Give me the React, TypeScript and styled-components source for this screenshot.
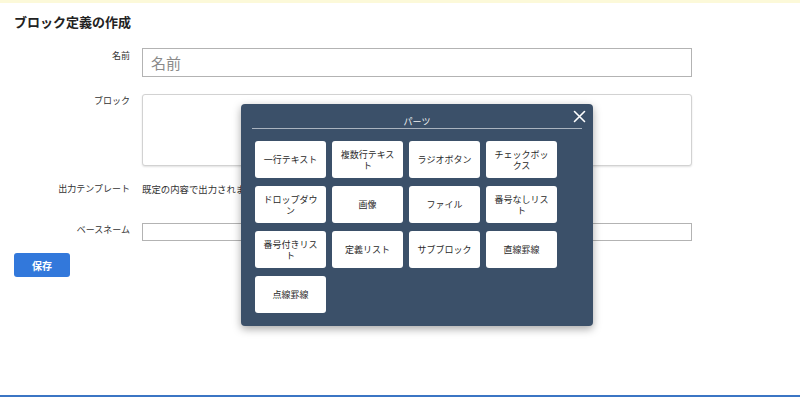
import React from "react";
import styled, { createGlobalStyle } from "styled-components";

const GlobalStyle = createGlobalStyle`
  html, body {
    margin: 0;
    padding: 0;
    background: #fff;
  }
  body {
    font-family: "Noto Sans CJK JP", "Noto Sans", sans-serif;
    color: #333;
  }
`;

const Page = styled.div`
  position: relative;
  height: 397px;
  display: flex;
  flex-direction: column;
  overflow: hidden;
`;

const Notice = styled.div`
  height: 3px;
  background: #fcf9d9;
`;

const Main = styled.main`
  flex: 1;
  padding: 11px 14px 0;
`;

const Title = styled.h1`
  margin: 0 0 18px;
  font-size: 13px;
  line-height: 16px;
  font-weight: 700;
  color: #222;
`;

const Row = styled.div<{ $mb: number }>`
  display: grid;
  grid-template-columns: 116px 550px;
  column-gap: 12px;
  margin-bottom: ${(p) => p.$mb}px;
`;

const Label = styled.label<{ $pt: number }>`
  text-align: right;
  font-size: 9px;
  line-height: 12px;
  padding-top: ${(p) => p.$pt}px;
  color: #333;
`;

const TextInput = styled.input<{ $h: number; $fs: number }>`
  display: block;
  box-sizing: border-box;
  width: 100%;
  height: ${(p) => p.$h}px;
  border: 1px solid #b3b3b3;
  border-radius: 0;
  padding: 0 8px;
  font-family: inherit;
  font-size: ${(p) => p.$fs}px;
  color: #333;
  outline: none;
  &::placeholder {
    color: #8a8a8a;
  }
`;

const TextArea = styled.textarea`
  display: block;
  box-sizing: border-box;
  width: 100%;
  height: 72px;
  border: 1px solid #d2d2d2;
  border-radius: 3px;
  box-shadow: 0 1px 2px rgba(0, 0, 0, 0.12);
  resize: none;
  outline: none;
  font-family: inherit;
`;

const Plain = styled.div`
  font-size: 9.4px;
  line-height: 12px;
  white-space: nowrap;
  color: #333;
`;

const SaveButton = styled.button`
  display: block;
  width: 56px;
  height: 24px;
  border: none;
  border-radius: 3px;
  background: #3278db;
  color: #fff;
  font-family: inherit;
  font-weight: 700;
  font-size: 10px;
  padding: 0;
`;

const Footer = styled.div`
  height: 2px;
  background: #3b75c4;
`;

const Modal = styled.div`
  position: absolute;
  left: 241px;
  top: 104px;
  width: 352px;
  height: 222px;
  box-sizing: border-box;
  padding: 12px 11px;
  background: #3b5069;
  border-radius: 4px;
  box-shadow: 0 3px 8px rgba(0, 0, 0, 0.35);
`;

const ModalHead = styled.div`
  text-align: center;
  font-size: 9px;
  line-height: 12px;
  color: #f2f2f2;
  border-bottom: 1px solid #a9b3bf;
`;

const Close = styled.button`
  position: absolute;
  top: 6px;
  right: 7px;
  width: 13px;
  height: 13px;
  padding: 0;
  border: none;
  background: none;
  display: flex;
`;

const Parts = styled.div`
  display: grid;
  grid-template-columns: repeat(4, 71px);
  grid-auto-rows: 37px;
  column-gap: 6px;
  row-gap: 8px;
  margin-top: 12px;
  padding: 0 3px;
`;

const Part = styled.button`
  box-sizing: border-box;
  border: none;
  border-radius: 3px;
  background: #fff;
  padding: 0 6px;
  font-family: inherit;
  font-size: 9px;
  line-height: 11px;
  font-weight: 400;
  color: #2a2a2a;
  text-align: center;
`;

const parts = [
  "一行テキスト",
  "複数行テキスト",
  "ラジオボタン",
  "チェックボックス",
  "ドロップダウン",
  "画像",
  "ファイル",
  "番号なしリスト",
  "番号付きリスト",
  "定義リスト",
  "サブブロック",
  "直線罫線",
  "点線罫線",
];

export default function App() {
  return (
    <Page>
      <GlobalStyle />
      <Notice />
      <Main>
        <Title>ブロック定義の作成</Title>
        <Row $mb={17}>
          <Label $pt={2}>名前</Label>
          <TextInput $h={29} $fs={15} placeholder="名前" />
        </Row>
        <Row $mb={17}>
          <Label $pt={1}>ブロック</Label>
          <TextArea />
        </Row>
        <Row $mb={28}>
          <Label $pt={0}>出力テンプレート</Label>
          <Plain>既定の内容で出力されます</Plain>
        </Row>
        <Row $mb={12}>
          <Label $pt={1}>ベースネーム</Label>
          <TextInput $h={18} $fs={10} />
        </Row>
        <SaveButton>保存</SaveButton>
      </Main>
      <Footer />

      <Modal>
        <ModalHead>パーツ</ModalHead>
        <Close aria-label="close">
          <svg width="13" height="13" viewBox="0 0 13 13">
            <path d="M1.5 1.5 L11.5 11.5 M11.5 1.5 L1.5 11.5" stroke="#fff" strokeWidth="1.6" strokeLinecap="round" />
          </svg>
        </Close>
        <Parts>
          {parts.map((p) => (
            <Part key={p}>{p}</Part>
          ))}
        </Parts>
      </Modal>
    </Page>
  );
}
